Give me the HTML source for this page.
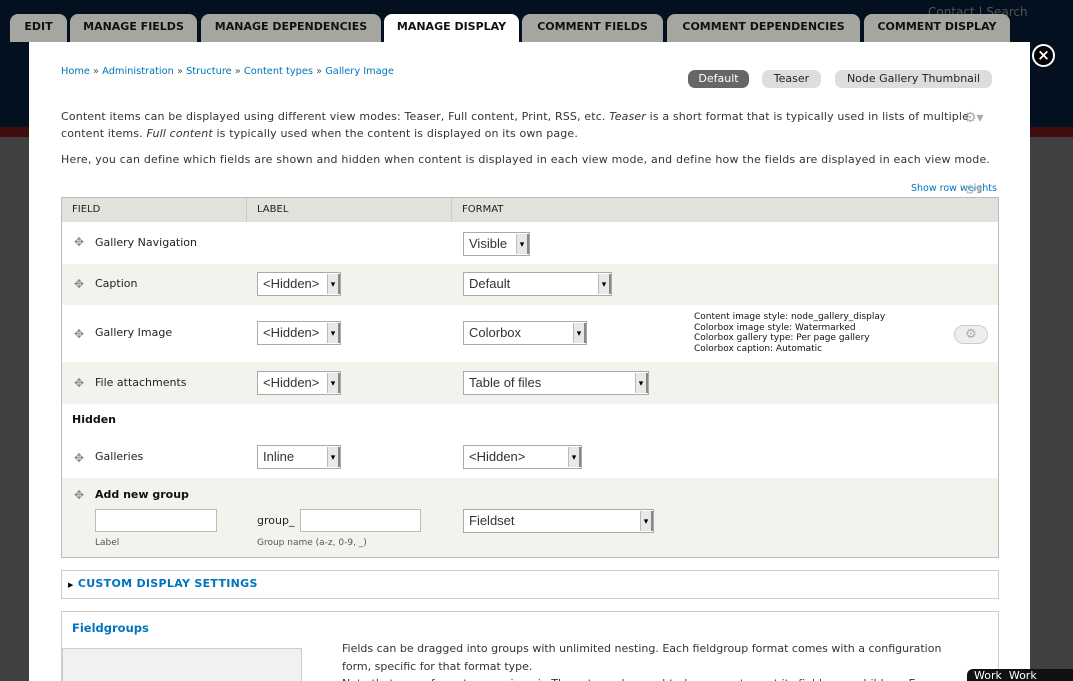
<!DOCTYPE html>
<html style="overflow:hidden;height:681px"><head><style>
*{box-sizing:border-box;margin:0;padding:0}
body{width:1073px;height:681px;overflow:hidden;position:relative;font-family:"DejaVu Sans","Liberation Sans",sans-serif;font-size:10.5px;color:#333;background:#404040}
.abs{position:absolute}
.tab{position:absolute;top:14px;height:28px;background:#a6a6a0;border-radius:8px 8px 0 0;font-weight:bold;font-size:11px;color:#111;text-align:center;line-height:26px;letter-spacing:0}
.tab.on{background:#fff}
a{color:#0074bd;text-decoration:none}
.pill{position:absolute;top:70px;height:18px;border-radius:7px;background:#ddd;color:#222;text-align:center;line-height:18px;font-size:11px}
.sel{position:absolute;height:24px;border:1px solid #aaa;background:#fff;font-family:"Liberation Sans",sans-serif;font-size:13px;color:#333;line-height:22px;padding-left:5px}
.sel:after{content:"▾";position:absolute;right:0;top:1px;width:10px;height:20px;background:#e8e8e8;border-left:1px solid #bbb;border-right:2px solid #888;font-size:9px;line-height:20px;text-align:center;color:#000}
.row{position:absolute;left:62px;width:936px}
.drag{position:absolute;left:12px;color:#888;font-size:12px}
.fl{position:absolute;left:33px;font-size:11px;color:#222}
.inp{position:absolute;height:23px;border:1px solid #bbb;background:#fff}
</style></head><body>
<div class="abs" style="left:0;top:0;width:1073px;height:127px;background:#02101f"></div>
<div class="abs" style="left:0;top:127px;width:1073px;height:10px;background:#3f0d0d"></div>
<div class="abs" style="left:928px;top:5px;color:#555;font-size:12px">Contact | Search</div>

<div class="tab" style="left:10px;width:57px">EDIT</div>
<div class="tab" style="left:70px;width:127px">MANAGE FIELDS</div>
<div class="tab" style="left:201px;width:180px">MANAGE DEPENDENCIES</div>
<div class="tab on" style="left:384px;width:135px">MANAGE DISPLAY</div>
<div class="tab" style="left:522px;width:141px">COMMENT FIELDS</div>
<div class="tab" style="left:667px;width:193px">COMMENT DEPENDENCIES</div>
<div class="tab" style="left:864px;width:146px">COMMENT DISPLAY</div>

<div class="abs" style="left:29px;top:42px;width:1001px;height:639px;background:#fff"></div>
<div class="abs" style="left:1032px;top:44px;width:23px;height:23px;border-radius:50%;background:#000;border:2px solid #fff;color:#fff;font-size:15px;font-weight:bold;text-align:center;line-height:18px;z-index:5">×</div>

<div class="abs" style="left:61px;top:66px;font-size:9.8px;color:#555"><a>Home</a> » <a>Administration</a> » <a>Structure</a> » <a>Content types</a> » <a>Gallery Image</a></div>
<div class="pill" style="left:688px;width:61px;background:#666;color:#fff">Default</div>
<div class="pill" style="left:762px;width:59px">Teaser</div>
<div class="pill" style="left:835px;width:157px">Node Gallery Thumbnail</div>

<div class="abs" style="left:61px;top:108px;width:925px;line-height:17px;color:#333;font-size:11px;letter-spacing:0.15px">Content items can be displayed using different view modes: Teaser, Full content, Print, RSS, etc. <i>Teaser</i> is a short format that is typically used in lists of multiple content items. <i>Full content</i> is typically used when the content is displayed on its own page.</div>
<div class="abs" style="left:964px;top:110px;color:#aaa;font-size:14px">⚙▾</div>
<div class="abs" style="left:61px;top:153px;color:#333;font-size:11px;letter-spacing:0.2px;white-space:nowrap">Here, you can define which fields are shown and hidden when content is displayed in each view mode, and define how the fields are displayed in each view mode.</div>
<div class="abs" style="left:911px;top:183px;font-size:9.5px"><a>Show row weights</a></div>
<div class="abs" style="left:964px;top:183px;color:#bbb;font-size:13px">⚙▾</div>

<div class="abs" style="left:61px;top:197px;width:938px;height:361px;border:1px solid #bbb;background:#fff"></div>
<div class="row" style="top:198px;height:24px;background:#e1e2dc;font-size:10px;color:#222;line-height:24px">
<span class="abs" style="left:10px">FIELD</span><span class="abs" style="left:195px">LABEL</span><span class="abs" style="left:400px">FORMAT</span>
<div class="abs" style="left:184px;top:0;width:1px;height:24px;background:#ccc"></div>
<div class="abs" style="left:389px;top:0;width:1px;height:24px;background:#ccc"></div>
</div>
<div class="row" style="top:222px;height:42px"><span class="drag" style="top:13px">✥</span><span class="fl" style="top:14px">Gallery Navigation</span><div class="sel" style="left:401px;top:10px;width:67px">Visible</div></div>
<div class="row" style="top:264px;height:41px;background:#f3f3ee"><span class="drag" style="top:13px">✥</span><span class="fl" style="top:13px">Caption</span><div class="sel" style="left:195px;top:8px;width:84px">&lt;Hidden&gt;</div><div class="sel" style="left:401px;top:8px;width:149px">Default</div></div>
<div class="row" style="top:305px;height:57px"><span class="drag" style="top:22px">✥</span><span class="fl" style="top:21px">Gallery Image</span><div class="sel" style="left:195px;top:16px;width:84px">&lt;Hidden&gt;</div><div class="sel" style="left:401px;top:16px;width:124px">Colorbox</div>
<div class="abs" style="left:632px;top:7px;font-size:9px;line-height:10.5px;color:#111">Content image style: node_gallery_display<br>Colorbox image style: Watermarked<br>Colorbox gallery type: Per page gallery<br>Colorbox caption: Automatic</div>
<div class="abs" style="left:892px;top:20px;width:34px;height:19px;border-radius:10px;border:1px solid #ccc;background:#eee;color:#aaa;text-align:center;line-height:17px;font-size:13px">⚙</div></div>
<div class="row" style="top:362px;height:42px;background:#f3f3ee"><span class="drag" style="top:14px">✥</span><span class="fl" style="top:14px">File attachments</span><div class="sel" style="left:195px;top:9px;width:84px">&lt;Hidden&gt;</div><div class="sel" style="left:401px;top:9px;width:186px">Table of files</div></div>
<div class="row" style="top:404px;height:33px"><span class="abs" style="left:10px;top:9px;font-weight:bold;color:#111;font-size:11px">Hidden</span></div>
<div class="row" style="top:437px;height:41px"><span class="drag" style="top:14px">✥</span><span class="fl" style="top:13px">Galleries</span><div class="sel" style="left:195px;top:8px;width:84px">Inline</div><div class="sel" style="left:401px;top:8px;width:119px">&lt;Hidden&gt;</div></div>
<div class="row" style="top:478px;height:79px;background:#f3f3ee"><span class="drag" style="top:10px">✥</span><span class="fl" style="top:10px;font-weight:bold;color:#111">Add new group</span>
<div class="inp" style="left:33px;top:31px;width:122px"></div><span class="abs" style="left:33px;top:60px;font-size:9px;color:#555">Label</span>
<span class="abs" style="left:195px;top:36px;color:#222;font-size:11px">group_</span><div class="inp" style="left:238px;top:31px;width:121px"></div><span class="abs" style="left:195px;top:60px;font-size:9px;color:#555">Group name (a-z, 0-9, _)</span>
<div class="sel" style="left:401px;top:31px;width:191px">Fieldset</div></div>

<div class="abs" style="left:61px;top:570px;width:938px;height:29px;border:1px solid #ccc"></div>
<div class="abs" style="left:68px;top:577px;font-weight:bold;color:#0074bd;font-size:11px;letter-spacing:0.3px"><span style="color:#000;font-size:7px">▶</span> CUSTOM DISPLAY SETTINGS</div>

<div class="abs" style="left:61px;top:611px;width:938px;height:70px;border:1px solid #ccc;border-bottom:none"></div>
<div class="abs" style="left:72px;top:621px;font-weight:bold;color:#0074bd;font-size:11.5px">Fieldgroups</div>
<div class="abs" style="left:62px;top:648px;width:240px;height:33px;background:#f1f1f1;border:1px solid #ccc;border-bottom:none"></div>
<div class="abs" style="left:342px;top:640px;width:605px;height:41px;overflow:hidden;line-height:17.5px;color:#333;font-size:11px">Fields can be dragged into groups with unlimited nesting. Each fieldgroup format comes with a configuration form, specific for that format type.<br>Note that some formats come in pair. These types have a html wrapper to nest its fieldgroup children. E.g.</div>

<div class="abs" style="left:1030px;top:0;width:43px;height:127px;background:#02101f"></div>
<div class="abs" style="left:1030px;top:127px;width:43px;height:10px;background:#3f0d0d"></div>
<div class="abs" style="left:967px;top:669px;width:106px;height:12px;background:#111;border-radius:6px 0 0 0;color:#fff;font-size:11px;padding-left:7px;line-height:14px;overflow:hidden">Work &nbsp;Work</div>
</body></html>
